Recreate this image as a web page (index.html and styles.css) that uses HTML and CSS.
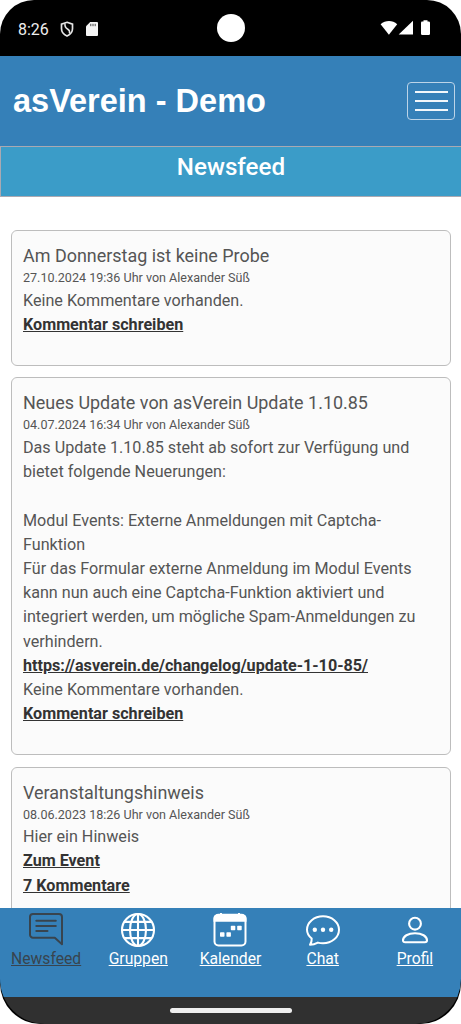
FILE: index.html
```html
<!DOCTYPE html>
<html lang="de">
<head>
<meta charset="utf-8">
<title>asVerein - Demo</title>
<link rel="stylesheet" href="styles.css">
</head>
<body>
<div class="phone">
  <div class="statusbar">
    <span class="clock">8:26</span>
    <svg class="shield" width="14" height="16" viewBox="0 0 14 16" fill="none" stroke="#e4e4e4" stroke-width="1.7"><path d="M7 1.300 12.500 3.200v4.600c0 3.300-2.200 5.800-5.500 7.200C3.700 13.600 1.500 11.100 1.500 7.800V3.200Z"/><path d="M5 2.500c-.4 3 .4 4.300 2.500 5.500 2 1.200 2.500 2.500 2 4.500" stroke-width="1.500"/></svg>
    <svg class="sdcard" width="12" height="14" viewBox="0 0 12 14"><path d="M4.200 0H11a1 1 0 0 1 1 1v12a1 1 0 0 1-1 1H1a1 1 0 0 1-1-1V4.300Z" fill="#f4f4f4"/><path d="M4.800 1.800v2.400M7 1.800v2.400M9.200 1.800v2.400" stroke="#444" stroke-width="1"/></svg>
    <span class="camera"></span>
    <svg class="signals" width="50" height="16" viewBox="0 0 50 16" fill="#fff"><path d="M.6 4.200C5.500-.2 12.500-.2 17.200 4.200L8.900 14.800Z"/><path d="M33 .8V14.500H18.700Z"/><path d="M41.500 1.500h2V.2h4v1.300h1.200q1.300 0 1.300 1.300v10.900q0 1.300-1.300 1.300h-6.400q-1.300 0-1.300-1.300V2.800Z"/></svg>
  </div>
  <header class="header">
    <h1 class="brand">asVerein - Demo</h1>
    <button class="menu" aria-label="Menü"><span></span><span></span><span></span></button>
  </header>
  <h2 class="page-title">Newsfeed</h2>
  <main class="feed">
    <article class="card">
      <h3>Am Donnerstag ist keine Probe</h3>
      <p class="meta">27.10.2024 19:36 Uhr von Alexander Süß</p>
      <p>Keine Kommentare vorhanden.</p>
      <a>Kommentar schreiben</a>
    </article>
    <article class="card">
      <h3>Neues Update von asVerein Update 1.10.85</h3>
      <p class="meta">04.07.2024 16:34 Uhr von Alexander Süß</p>
      <p>Das Update 1.10.85 steht ab sofort zur Verfügung und<br>bietet folgende Neuerungen:<br><br>Modul Events: Externe Anmeldungen mit Captcha-<br>Funktion<br>Für das Formular externe Anmeldung im Modul Events<br>kann nun auch eine Captcha-Funktion aktiviert und<br>integriert werden, um mögliche Spam-Anmeldungen zu<br>verhindern.</p>
      <a>https://asverein.de/changelog/update-1-10-85/</a>
      <p>Keine Kommentare vorhanden.</p>
      <a>Kommentar schreiben</a>
    </article>
    <article class="card">
      <h3>Veranstaltungshinweis</h3>
      <p class="meta">08.06.2023 18:26 Uhr von Alexander Süß</p>
      <p>Hier ein Hinweis</p>
      <a>Zum Event</a>
      <a>7 Kommentare</a>
    </article>
  </main>
  <footer class="bottom">
    <div class="bottom-inner">
      <nav class="tabs">
        <a class="tab active">
          <svg width="36" height="36" viewBox="0 0 36 36" fill="none" stroke="currentColor" stroke-width="2" stroke-linecap="round" stroke-linejoin="round"><path d="M4.500 2H31a3 3 0 0 1 3 3v27.200l-7.200-6.500H5a3 3 0 0 1-3-3V5a3 3 0 0 1 3-3Z"/><path d="M8.300 8.800h19.500M8.300 13.900h19.500M8.300 19h11.200"/></svg>
          <span>Newsfeed</span>
        </a>
        <a class="tab">
          <svg width="36" height="36" viewBox="0 0 36 36" fill="none" stroke="currentColor" stroke-width="2.100"><circle cx="18" cy="18" r="16"/><ellipse cx="18" cy="18" rx="8" ry="16"/><path d="M18 2v32M2 18h32M4.500 9.900h27M4.500 26.100h27"/></svg>
          <span>Gruppen</span>
        </a>
        <a class="tab">
          <svg width="36" height="36" viewBox="0 0 36 36"><path d="M6.500 2.800h23a4 4 0 0 1 4 4v22.700a4 4 0 0 1-4 4h-23a4 4 0 0 1-4-4V6.800a4 4 0 0 1 4-4Z" fill="none" stroke="currentColor" stroke-width="2"/><path d="M1.500 9.700V6.500a4 4 0 0 1 4-4H8V1h2v1.500h16V1h2v1.500h2.500a4 4 0 0 1 4 4v3.200Z" fill="currentColor"/><g fill="currentColor"><rect x="18.800" y="13.700" width="4.500" height="4.500" rx=".7"/><rect x="25.200" y="13.700" width="4.500" height="4.500" rx=".7"/><rect x="8" y="20.200" width="4.500" height="4.500" rx=".7"/><rect x="14.400" y="20.200" width="4.500" height="4.500" rx=".7"/></g></svg>
          <span>Kalender</span>
        </a>
        <a class="tab">
          <svg width="36" height="36" viewBox="0 0 36 36" fill="none" stroke="currentColor" stroke-width="2" stroke-linejoin="round"><path d="M6.700 26.500C3.700 24 2 20.900 2 17.700 2 10.200 9.200 4.300 18 4.300s16 5.900 16 13.400-7.200 13.600-16 13.600c-1.800 0-3.500-.2-5.100-.7-2.500 1.400-5 2.200-7.900 2.200 1.300-1.900 1.900-4 1.700-6.300Z"/><g fill="currentColor" stroke="none"><circle cx="9.800" cy="17.800" r="2.200"/><circle cx="18" cy="17.800" r="2.200"/><circle cx="26.200" cy="17.800" r="2.200"/></g></svg>
          <span>Chat</span>
        </a>
        <a class="tab">
          <svg width="36" height="36" viewBox="0 0 36 36" fill="none" stroke="currentColor" stroke-width="2.100" stroke-linejoin="round"><circle cx="18" cy="11.700" r="5.900"/><path d="M8.200 30.300c-1.400 0-2.200-.7-2.200-2 0-4 5-7.100 12-7.100s12 3.100 12 7.100c0 1.300-.8 2-2.200 2Z"/></svg>
          <span>Profil</span>
        </a>
      </nav>
      <div class="gesture"><span></span></div>
    </div>
  </footer>
</div>
</body>
</html>
```

FILE: styles.css
```css
* { box-sizing: border-box; margin: 0; padding: 0; }
body { background: #fff; font-family: Roboto, sans-serif; color: #555; }
.phone {
  width: 461px; height: 1024px; overflow: hidden;
  display: flex; flex-direction: column;
  border-radius: 34px 34px 41px 41px;
  background: #fff;
}
.statusbar {
  flex: none; height: 56px; background: #000;
  display: grid; grid-template-columns: 42px 26px 131px 1fr 50px; align-items: center;
  padding: 0 31px 0 18px;
}
.clock { color: #eee; font-size: 16px; line-height: 20px; padding-top: 3px; }
.shield { margin-top: 1px; }
.sdcard { margin-top: 1px; }
.camera { width: 28px; height: 28px; border-radius: 50%; background: #fff; justify-self: start; }
.header {
  flex: none; height: 90px; background: #3580b8;
  display: flex; justify-content: space-between; align-items: center;
  padding: 0 6px 1px 13px;
}
.brand { font: bold 32.500px/40px "Liberation Sans", Arial, sans-serif; color: #fff; }
.menu {
  width: 48px; height: 38px; border: 1px solid #bcd4e8; border-radius: 4px; background: none;
  display: flex; flex-direction: column; align-items: center; justify-content: center; gap: 7px;
}
.menu span { width: 33px; height: 2px; background: #f2f7fb; }
.page-title {
  flex: none; height: 50.500px; background: #3b9cc8; border: 1px solid #aaa9b2; border-right: 0;
  color: #fff; font-size: 24.200px; line-height: 30px; font-weight: 500; text-align: center; padding-top: 5px;
}
.feed { flex: 1; min-height: 0; overflow: hidden; padding: 33.500px 10px 0 11px; display: flex; flex-direction: column; gap: 11.400px; }
.card {
  flex: none; background: #fbfbfb; border: 1px solid #bdbdbd; border-radius: 6px;
  padding: 12px 11px 28px; font-size: 16.150px; line-height: 24.170px;
}
.card h3 { font-size: 17.950px; line-height: 25px; font-weight: 400; }
.card .meta { font-size: 12.550px; line-height: 20.700px; }
.card a { display: block; color: #333; font-weight: 700; text-decoration: underline; }
.bottom { flex: none; background: #000; }
.bottom-inner { border-radius: 0 0 45px 45px; overflow: hidden; }
.tabs {
  height: 89.500px; background: #3580b8; color: #fff;
  display: grid; grid-template-columns: repeat(5, 1fr);
}
.tab { display: flex; flex-direction: column; align-items: center; padding-top: 4px; font-size: 15.700px; line-height: 20px; text-decoration: underline; }
.tab svg { flex: none; }
.tab span { margin-top: 1px; }
.active { color: #38444e; }
.gesture { height: 27px; background: #303030; display: flex; justify-content: center; padding-top: 10.500px; }
.gesture span { width: 122px; height: 5px; border-radius: 2.500px; background: #eee; }
```
